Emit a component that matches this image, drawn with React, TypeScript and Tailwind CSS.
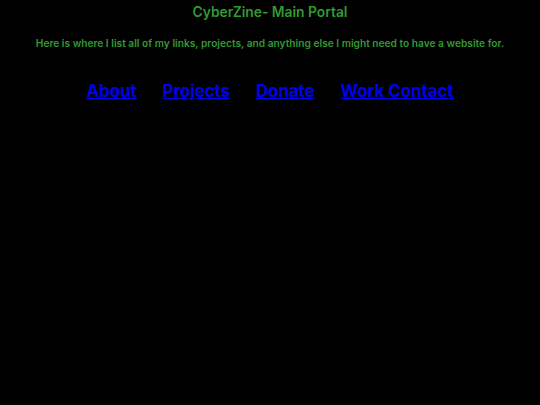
export default function App() {
	const links = ['About', 'Projects', 'Donate', 'Work Contact']

	return (
		<div
			className="min-h-[405px] bg-black text-center"
			style={{ fontFamily: 'Inter, sans-serif' }}
		>
			<h1 className="pt-[3px] text-[13.8px] leading-[18px] font-semibold text-[#339933]">
				CyberZine- Main Portal
			</h1>
			<p className="mt-[15px] text-[10.2px] leading-[14px] font-semibold text-[#339933]">
				Here is where I list all of my links, projects, and anything else I might
				need to have a website for.
			</p>
			<nav className="mt-[30px] flex justify-center gap-[26px]">
				{links.map((link) => (
					<a
						key={link}
						href="#"
						className="text-[16.8px] leading-[22px] font-bold text-[#0000ee] underline"
					>
						{link}
					</a>
				))}
			</nav>
		</div>
	)
}
